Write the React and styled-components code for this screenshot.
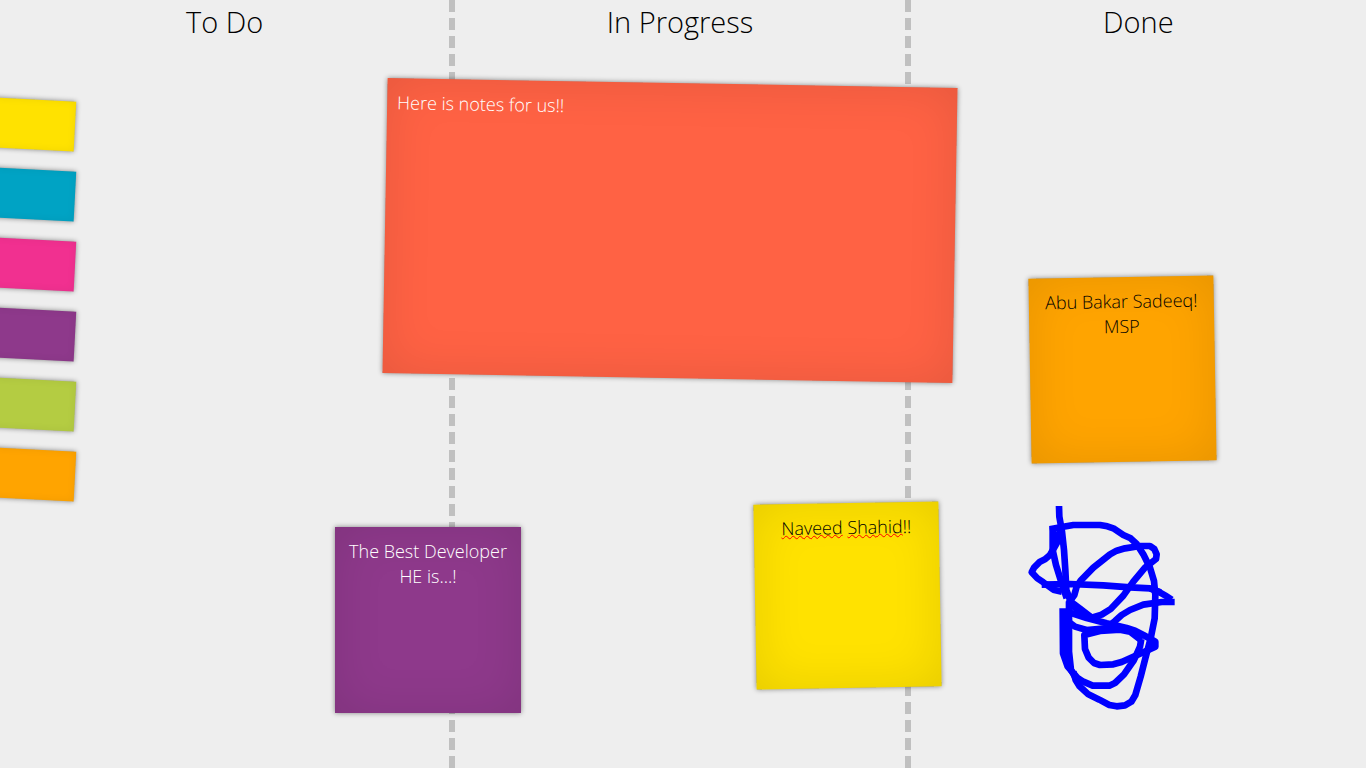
import React from "react";
import styled, { createGlobalStyle } from "styled-components";

const GlobalStyle = createGlobalStyle`
  *, *::before, *::after { box-sizing: border-box; }
  body {
    margin: 0;
    background: #eeeeee;
    color: #000;
    font-family: "Open Sans", "Noto Sans", sans-serif;
    font-weight: 300;
  }
`;

const Board = styled.main`
  position: relative;
  display: grid;
  grid-template-columns: repeat(3, 1fr);
  min-height: 100vh;
  overflow: hidden;
`;

const Column = styled.section`
  display: flex;

  &:not(:last-of-type)::after {
    content: "";
    flex: 0 0 6px;
    background: repeating-linear-gradient(#c0c0c0 0 12px, transparent 12px 18px);
  }
`;

const ColumnBody = styled.div`
  flex: 1;
  display: flex;
  flex-direction: column;
  gap: 55px;
`;

const ColumnTitle = styled.h1`
  margin: 0;
  font-size: 29px;
  font-weight: 300;
  line-height: 44px;
  text-align: center;
`;

const Palette = styled.nav`
  display: flex;
  flex-direction: column;
  align-items: flex-start;
  gap: 20px;
  margin-left: -25px;
`;

const Swatch = styled.button`
  width: 100px;
  height: 50px;
  padding: 0;
  border: 0;
  background: ${(p) => p.$color};
  box-shadow: 0 0 5px rgba(0, 0, 0, 0.45), inset 0 0 8px rgba(0, 0, 0, 0.06);
  transform: rotate(3deg);
  cursor: pointer;
`;

const Note = styled.div`
  position: absolute;
  left: ${(p) => p.$x}px;
  top: ${(p) => p.$y}px;
  width: ${(p) => p.$width}px;
  min-height: ${(p) => p.$height}px;
  padding: 12px 10px;
  background: ${(p) => p.$color};
  color: ${(p) => p.$ink};
  box-shadow: 0 0 5px rgba(0, 0, 0, 0.45), inset 0 0 50px rgba(0, 0, 0, 0.1);
  font-size: 18px;
  line-height: 25px;
  text-align: ${(p) => p.$align};
  transform: rotate(${(p) => p.$tilt}deg);
  outline: none;
`;

const Line = styled.div`
  white-space: nowrap;
`;

const Misspelled = styled.span`
  text-decoration: underline wavy #f00 1px;
  text-decoration-skip-ink: none;
  text-underline-offset: 0;
`;

const Ink = styled.svg`
  position: absolute;
  left: 1020px;
  top: 495px;
  width: 165px;
  height: 220px;
  fill: none;
  stroke: #0000ff;
  stroke-width: 20px;
  stroke-linejoin: round;
`;

const colors = [
  ["Yellow", "#ffe200"],
  ["Blue", "#00a3c4"],
  ["Pink", "#f13090"],
  ["Purple", "#8e398b"],
  ["Green", "#b4cc42"],
  ["Orange", "#ffa400"],
];

const strokes = [
  "M117 33 L118 65 L126 110 L132 165 L136 225 L139 285 L152 320 L185 345 L215 368",
  "M98 97 L98 165 L108 210 L122 255 L140 310",
  "M89 103 L130 95 L160 90 L240 90 L262 94 L280 100 L310 120 L332 130 L350 147 L370 178 L390 218 L402 258 L406 300 L404 370 L392 430 L376 490 L362 545 L346 600 L334 620 L315 631 L290 634 L268 630 L238 614 L205 598 L178 573 L167 555 L160 530",
  "M120 105 L110 145 L90 180 L75 193 L60 200 L42 218 L35 232 L52 250 L70 262 L100 284 L126 290",
  "M65 269 L150 267 L250 271 L330 277 L390 280 L422 292",
  "M390 280 Q425 292 455 314",
  "M464 321 L425 321 L370 329 L330 345 L305 360 L285 378 L258 400 L200 405 L165 395 L145 380",
  "M145 325 L163 300 L170 275 L182 257 L220 218 L270 178 L290 167 L315 160 L360 153 L390 153 L403 162 L410 178 L408 192 L375 218 L340 260 L310 302 L272 342 L245 359 L215 368 L180 350 L148 325",
  "M140 350 L200 369 L260 385 L320 399 L345 407 L370 420 L406 440 L406 455 L370 472 L330 490 L305 501 L280 508 L240 510 L222 504 L206 488 L195 462 L193 420 L240 408 L300 404 L330 410 L364 436",
  "M128 340 L129 475 L143 515 L172 548 L190 560 L218 572 L268 572 L285 564 L312 538 L342 495 L360 455 L364 432",
  "M147 320 L147 470 L153 525 L175 562",
];

export default function App() {
  return (
    <>
      <GlobalStyle />
      <Board>
        <Column>
          <ColumnBody>
            <ColumnTitle>To Do</ColumnTitle>
            <Palette aria-label="New note">
              {colors.map(([name, color]) => (
                <Swatch key={name} type="button" aria-label={name} $color={color} />
              ))}
            </Palette>
          </ColumnBody>
        </Column>
        <Column>
          <ColumnBody>
            <ColumnTitle>In Progress</ColumnTitle>
          </ColumnBody>
        </Column>
        <Column>
          <ColumnBody>
            <ColumnTitle>Done</ColumnTitle>
          </ColumnBody>
        </Column>

        <Note contentEditable suppressContentEditableWarning spellCheck={false} role="textbox" aria-label="Team note"
          $x={385} $y={83} $width={570} $height={295} $tilt={1} $color="#ff6244" $ink="#fff" $align="left">
          <Line>Here is notes for us!!</Line>
        </Note>
        <Note contentEditable suppressContentEditableWarning spellCheck={false} role="textbox" aria-label="Orange note"
          $x={1030} $y={277} $width={185} $height={185} $tilt={-1} $color="#ffa400" $ink="#000" $align="center">
          <Line>Abu Bakar Sadeeq!</Line>
          <Line>MSP</Line>
        </Note>
        <Note contentEditable suppressContentEditableWarning spellCheck={false} role="textbox" aria-label="Yellow note"
          $x={755} $y={503} $width={185} $height={185} $tilt={-1} $color="#ffe200" $ink="#000" $align="center">
          <Line>
            <Misspelled>Naveed</Misspelled> <Misspelled>Shahid</Misspelled>!!
          </Line>
        </Note>
        <Note contentEditable suppressContentEditableWarning spellCheck={false} role="textbox" aria-label="Purple note"
          $x={335} $y={527} $width={186} $height={186} $tilt={0} $color="#8e398b" $ink="#fff" $align="center">
          <Line>The Best Developer</Line>
          <Line>HE is...!</Line>
        </Note>

        <Ink viewBox="0 0 495 660" aria-hidden="true">
          {strokes.map((d) => (
            <path key={d} d={d} />
          ))}
        </Ink>
      </Board>
    </>
  );
}
